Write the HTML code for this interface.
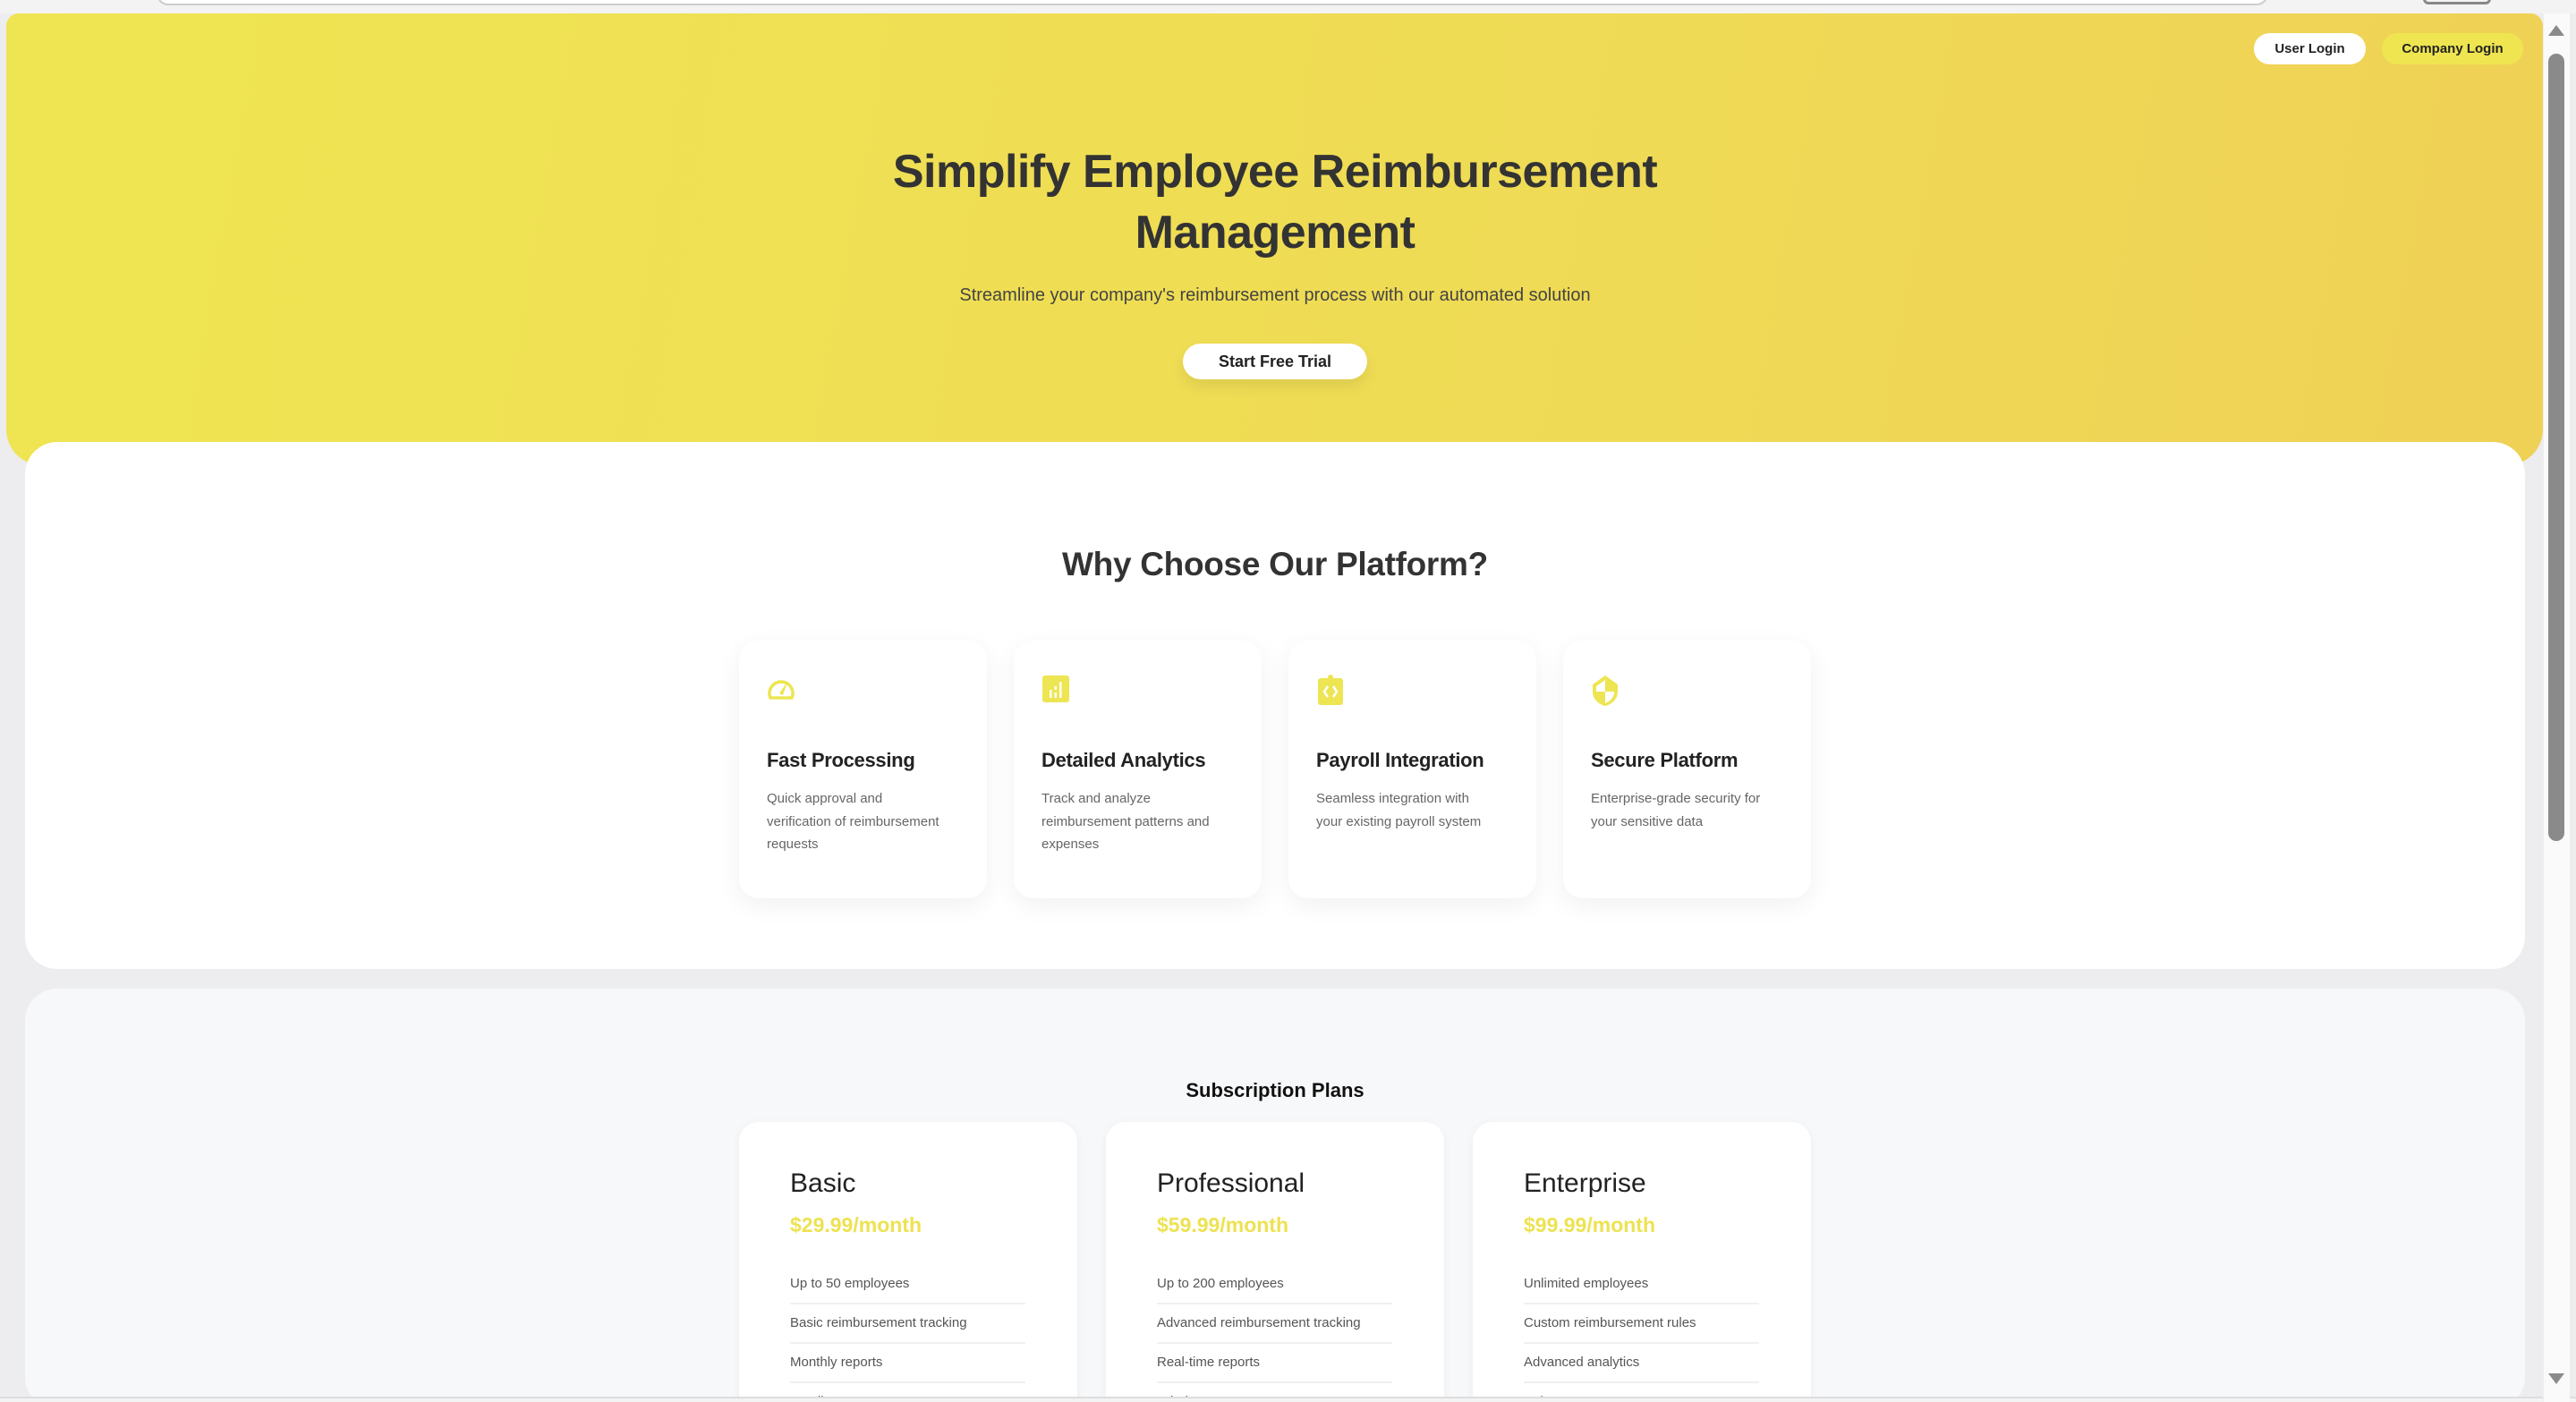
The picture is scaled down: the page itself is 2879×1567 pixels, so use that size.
<!DOCTYPE html>
<html style="width:2879px;height:1567px;overflow:hidden"><head><meta charset="utf-8"><style>
*{margin:0;padding:0;box-sizing:border-box}
body{width:2879px;height:1567px;overflow:hidden;background:#ededf0;font-family:"Liberation Sans",Arial,sans-serif;color:#333;position:relative}
.abs{position:absolute}
.top{left:0;top:0;width:2879px;height:15px;background:#f3f3f3}
.addr{left:175px;top:-20px;width:2360px;height:26px;border:2px solid #ccc;border-radius:14px;background:#fff}
.hero{left:7px;top:15px;width:2835px;height:505px;background:linear-gradient(100deg,#efe552 0%,#efdb55 60%,#efd155 100%);border-radius:14px 14px 40px 40px}
.btn{border-radius:20px;font-size:15px;font-weight:bold;text-align:center;line-height:35px;color:#222}
h1{position:absolute;left:0;width:2850px;text-align:center;font-size:52px;line-height:68px;font-weight:bold;color:#333;top:158px;letter-spacing:-0.5px}
.center{left:0;width:2850px;text-align:center}
.white{left:28px;top:494px;width:2794px;height:589px;background:#fff;border-radius:36px}
.grey{left:28px;top:1105px;width:2794px;height:470px;background:#f7f8fa;border-radius:36px}
.fc{top:716px;width:277px;height:288px;background:#fff;border-radius:22px;box-shadow:0 8px 28px rgba(0,0,0,.06)}
.fc svg{position:absolute;left:30px;top:37px}
.fc h3{position:absolute;left:31px;top:121px;font-size:22px;font-weight:bold;color:#222;letter-spacing:-0.3px}
.fc p{position:absolute;left:31px;top:164px;width:200px;font-size:15px;line-height:25.5px;color:#666}
.pc{top:1254px;width:378px;height:313px;background:#fff;border-radius:22px 22px 0 0;box-shadow:0 2px 10px rgba(0,0,0,.05);overflow:hidden}
.pc h2{position:absolute;left:57px;top:52px;font-size:30px;font-weight:normal;color:#222}
.pc .pr{position:absolute;left:57px;top:102px;font-size:23px;font-weight:bold;color:#ede252}
.pc ul{position:absolute;left:57px;top:160px;width:263px;list-style:none}
.pc li{height:44px;line-height:42px;font-size:15px;color:#555;border-bottom:2px solid #f0f0f0}
.sb{left:2842px;top:15px;width:30px;height:1552px;background:#fafafa;border-left:1px solid #eee}
</style></head><body>
<div class="abs top"></div>
<div class="abs addr"></div>
<div class="abs" style="left:2708px;top:-10px;width:76px;height:15px;border:3px solid #888;border-radius:6px"></div>
<div class="abs hero"></div>
<div class="abs btn" style="left:2519px;top:37px;width:125px;background:#fff">User Login</div>
<div class="abs btn" style="left:2662px;top:37px;width:158px;background:#efe550">Company Login</div>
<h1>Simplify Employee Reimbursement<br>Management</h1>
<div class="abs center" style="top:319px;font-size:20px;color:#444">Streamline your company's reimbursement process with our automated solution</div>
<div class="abs btn" style="left:1322px;top:384px;width:206px;height:40px;line-height:40px;background:#fff;font-size:18px;box-shadow:0 8px 16px rgba(0,0,0,.08)">Start Free Trial</div>
<div class="abs white"></div>
<div class="abs center" style="top:610px;font-size:37px;font-weight:bold;color:#333;letter-spacing:-0.3px">Why Choose Our Platform?</div>

<div class="abs fc" style="left:826px"><svg width="34" height="30" viewBox="0 0 34 30"><path d="M5 27 A13 13 0 1 1 29 27 Z" fill="none" stroke="#ede552" stroke-width="3.5"/><path d="M15 22 L24 9 L19 24 Z" fill="#ede552"/></svg><h3>Fast Processing</h3><p>Quick approval and verification of reimbursement requests</p></div>
<div class="abs fc" style="left:1133px"><svg width="34" height="34" viewBox="0 0 34 34"><rect x="2" y="2" width="30" height="30" rx="3" fill="#ede552"/><rect x="10" y="18" width="2.5" height="9" fill="#fff"/><rect x="15.5" y="14" width="2.5" height="4" fill="#fff"/><rect x="15.5" y="21" width="2.5" height="6" fill="#fff"/><rect x="21" y="9" width="2.5" height="18" fill="#fff"/></svg><h3>Detailed Analytics</h3><p>Track and analyze reimbursement patterns and expenses</p></div>
<div class="abs fc" style="left:1440px"><svg width="34" height="36" viewBox="0 0 34 36"><rect x="3" y="5" width="28" height="30" rx="3" fill="#ede552"/><circle cx="17" cy="4" r="3" fill="#ede552"/><path d="M14 14 L10 20 L14 26 M20 14 L24 20 L20 26" stroke="#fff" stroke-width="2.5" fill="none"/></svg><h3>Payroll Integration</h3><p>Seamless integration with your existing payroll system</p></div>
<div class="abs fc" style="left:1747px"><svg width="34" height="38" viewBox="0 0 34 38"><path d="M17 2 L31 12 L31 20 C31 28 25 34 17 36 C9 34 3 28 3 20 L3 12 Z" fill="#ede552"/><path d="M17 7 L7 14 L7 20 L17 20 Z M17 20 L27 20 C27 27 22 31 17 33 Z" fill="#fff"/></svg><h3>Secure Platform</h3><p>Enterprise-grade security for your sensitive data</p></div>

<div class="abs grey"></div>
<div class="abs center" style="top:1206px;font-size:22px;font-weight:bold;color:#111">Subscription Plans</div>
<div class="abs pc" style="left:826px"><h2>Basic</h2><div class="pr">$29.99/month</div><ul><li>Up to 50 employees</li><li>Basic reimbursement tracking</li><li>Monthly reports</li><li>Email support</li></ul></div>
<div class="abs pc" style="left:1236px"><h2>Professional</h2><div class="pr">$59.99/month</div><ul><li>Up to 200 employees</li><li>Advanced reimbursement tracking</li><li>Real-time reports</li><li>Priority support</li></ul></div>
<div class="abs pc" style="left:1646px"><h2>Enterprise</h2><div class="pr">$99.99/month</div><ul><li>Unlimited employees</li><li>Custom reimbursement rules</li><li>Advanced analytics</li><li>24/7 support</li></ul></div>
<div class="abs" style="left:0;top:1561px;width:2879px;height:6px;background:#f3f3f3;border-top:2px solid #ddd"></div>

<div class="abs sb"></div>
<div class="abs" style="left:2848px;top:60px;width:18px;height:880px;background:#8a8a8a;border-radius:9px"></div>
<div class="abs" style="left:2848px;top:28px;width:0;height:0;border-left:9px solid transparent;border-right:9px solid transparent;border-bottom:12px solid #8a8a8a"></div>
<div class="abs" style="left:2848px;top:1535px;width:0;height:0;border-left:9px solid transparent;border-right:9px solid transparent;border-top:12px solid #8a8a8a"></div>
</body></html>
